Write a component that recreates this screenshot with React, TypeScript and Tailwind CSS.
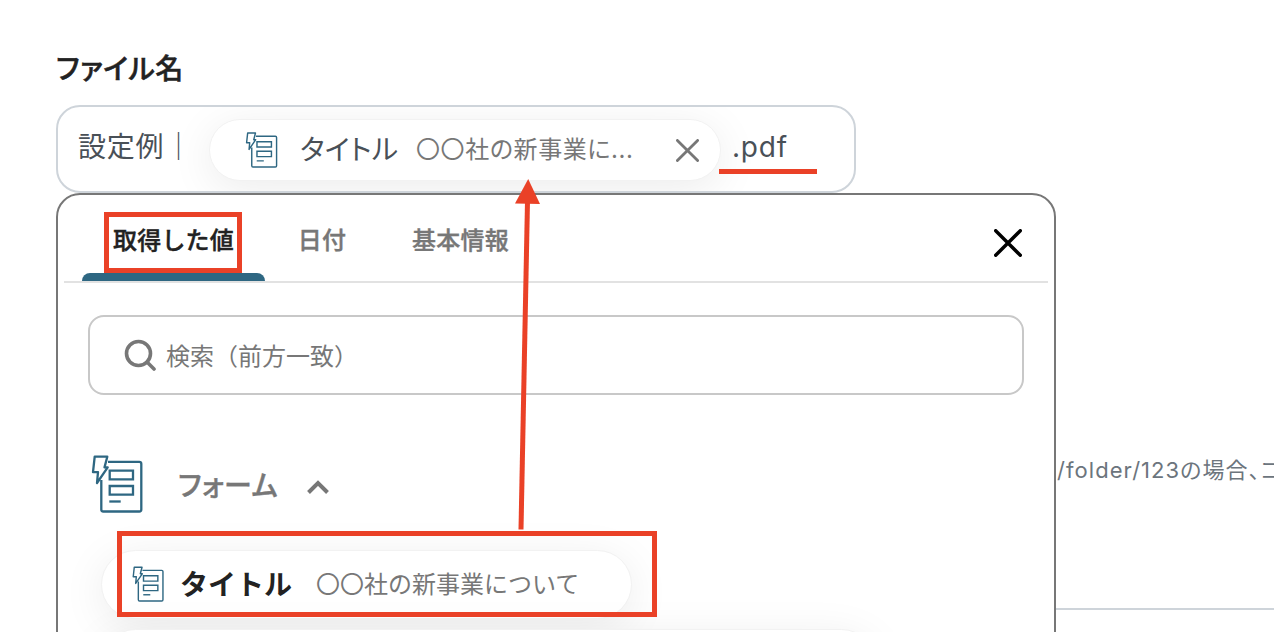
type IconProps = { className?: string };

function FormIcon({ className }: IconProps) {
  return (
    <svg viewBox="0 0 52 58" fill="none" stroke="#2e6782" strokeWidth="2.3" strokeLinejoin="round" className={className}>
      <path d="M17 6.8H48.3a2 2 0 0 1 2 2V54.500a2 2 0 0 1-2 2H12.3a2 2 0 0 1-2-2V25" />
      <path d="M3.7 1.7H16.3L13.5 12.4H16.7L6 28L7 17.2H2Z" />
      <path strokeLinejoin="miter" d="M18.7 15.7H42V24.3H18.7ZM18.7 31H42V39.7H18.7Z" />
      <path d="M18.3 46.500H29.7" />
    </svg>
  );
}

function CloseIcon({ className }: IconProps) {
  return (
    <svg viewBox="0 0 28 28" fill="none" stroke="currentColor" strokeWidth="3.4" strokeLinecap="round" className={className}>
      <path d="M1.7 1.7 26.3 26.3M26.3 1.7 1.7 26.3" />
    </svg>
  );
}

const tabs = [
  { label: '取得した値', className: 'w-[183px] text-[#222222]' },
  { label: '日付', className: 'w-[114px] text-[#777777]' },
  { label: '基本情報', className: 'w-[163px] text-[#777777]' },
];

function SelectedValue() {
  return (
    <div className="mt-0.5 ml-[25px] flex h-[62px] w-[512px] shrink-0 items-center rounded-full border border-[#f2f2f2] bg-white bg-clip-padding pl-[35px] shadow-[0_8px_44px_rgba(0,0,0,0.08)]">
      <FormIcon className="h-[36px] w-[33px]" />
      <span className="ml-[22px] w-[116px] text-[28px] tracking-[0.4px] text-[#495057] [font-feature-settings:'palt']">タイトル</span>
      <span className="w-[260px] text-[24px] tracking-[0.6px] text-[#777777] [font-feature-settings:'palt']">〇〇社の新事業に...</span>
      <CloseIcon className="size-[23px] text-[#777777]" />
    </div>
  );
}

function ValueMenu() {
  return (
    <div className="absolute top-[193px] left-[56px] h-[600px] w-[1000px] overflow-hidden rounded-[24px] border-2 border-[#777777] bg-white">
      <div className="mx-1.5 flex h-[88px] items-start justify-between border-b-2 border-[#e2e2e2] pr-[26px] pl-[18px]">
        <div className="flex h-[86px]">
          {tabs.map((tab, i) => (
            <div key={tab.label} className={`flex flex-col items-center justify-between ${tab.className}`}>
              <span className="pt-7 text-[24px] leading-[36px] font-medium tracking-[0.2px] [-webkit-text-stroke:0.4px]">{tab.label}</span>
              {i === 0 && <div className="h-2 w-full rounded-t-lg bg-[#2e6782]" />}
            </div>
          ))}
        </div>
        <CloseIcon className="mt-[34px] size-7 text-black" />
      </div>

      <div className="mx-[30px] mt-8 flex h-20 items-center rounded-2xl border-2 border-[#c8c8c8] pl-[34px]">
        <svg viewBox="0 0 32 32" fill="none" stroke="#777777" strokeWidth="3.6" className="size-8">
          <circle cx="14.500" cy="14.500" r="12" />
          <path d="M23 23 30 30" strokeLinecap="round" />
        </svg>
        <span className="mt-1 ml-[10px] text-[24px] text-[#777777]">検索（前方一致）</span>
      </div>

      <div className="mt-[60px] ml-[33px] flex h-[58px] items-center">
        <FormIcon className="h-[58px] w-[52px]" />
        <span className="mt-1 ml-[35px] w-[129px] text-[28px] font-medium tracking-[0.5px] text-[#777777] [font-feature-settings:'palt'] [-webkit-text-stroke:0.4px]">フォーム</span>
        <svg viewBox="0 0 22 14" fill="none" stroke="#777777" strokeWidth="4" className="mt-1.5 h-[14px] w-[22px]">
          <path d="M1.500 12.500 11 3 20.500 12.500" />
        </svg>
      </div>

      <div className="mt-[37px] ml-[43px] flex flex-col gap-[10px]">
        <div className="flex h-[69px] w-[531px] items-center rounded-full border border-[#f2f2f2] bg-white bg-clip-padding pl-[30px] shadow-[0_8px_44px_rgba(0,0,0,0.08)]">
          <FormIcon className="-mt-0.5 h-[36px] w-[32px]" />
          <span className="ml-[16px] w-[136px] text-[28px] font-bold text-[#222222]">タイトル</span>
          <span className="text-[24px] text-[#777777]">〇〇社の新事業について</span>
        </div>
        <div className="h-[69px] w-[775px] rounded-full border border-[#f2f2f2] bg-white shadow-[0_8px_44px_rgba(0,0,0,0.08)]" />
      </div>
    </div>
  );
}

function Annotations() {
  return (
    <>
      <div className="absolute top-[169px] left-[719px] h-[5px] w-[98px] bg-[#ea4127]" />
      <div className="absolute top-[212px] left-[104px] h-[61px] w-[138px] border-5 border-[#ea4127]" />
      <div className="absolute top-[531px] left-[117px] h-[86px] w-[540px] border-5 border-[#ea4127]" />
      <svg viewBox="0 0 30 352" className="absolute top-[179px] left-[512px] h-[352px] w-[30px]">
        <path d="M9 350.500 15.500 22" stroke="#ea4127" strokeWidth="5" />
        <path d="M16.200 0 28 25 3 24.500Z" fill="#ea4127" />
      </svg>
    </>
  );
}

export default function App() {
  return (
    <div className="relative h-[632px] w-[1274px] overflow-hidden bg-white pt-[51px] pl-[56px] font-['Inter','Noto_Sans_CJK_JP',sans-serif] whitespace-nowrap">
      <div className="h-[54px] text-[28px] leading-[36px] font-medium tracking-[0.6px] text-[#222222] [font-feature-settings:'palt'] [-webkit-text-stroke:0.5px]">ファイル名</div>
      <div className="flex h-[88px] w-[800px] items-center overflow-hidden rounded-[24px] border-2 border-[#ced4da] pl-[20px] text-[28px] text-[#495057]">
        <span className="-mt-1 w-[106px] tracking-[0.8px] [font-feature-settings:'palt']">設定例｜</span>
        <SelectedValue />
        <span className="-mt-1 ml-[11px] tracking-[0.8px]">.pdf</span>
      </div>

      <div className="mt-[259px] ml-[1001px] h-[156px] text-[22px] leading-[36px] tracking-[1.05px] text-[#6c757d] [font-feature-settings:'palt']">/folder/123の場合、コ</div>
      <div className="h-[88px] w-[1400px] border-t-2 border-[#ced4da]" />

      <ValueMenu />
      <Annotations />
    </div>
  );
}
